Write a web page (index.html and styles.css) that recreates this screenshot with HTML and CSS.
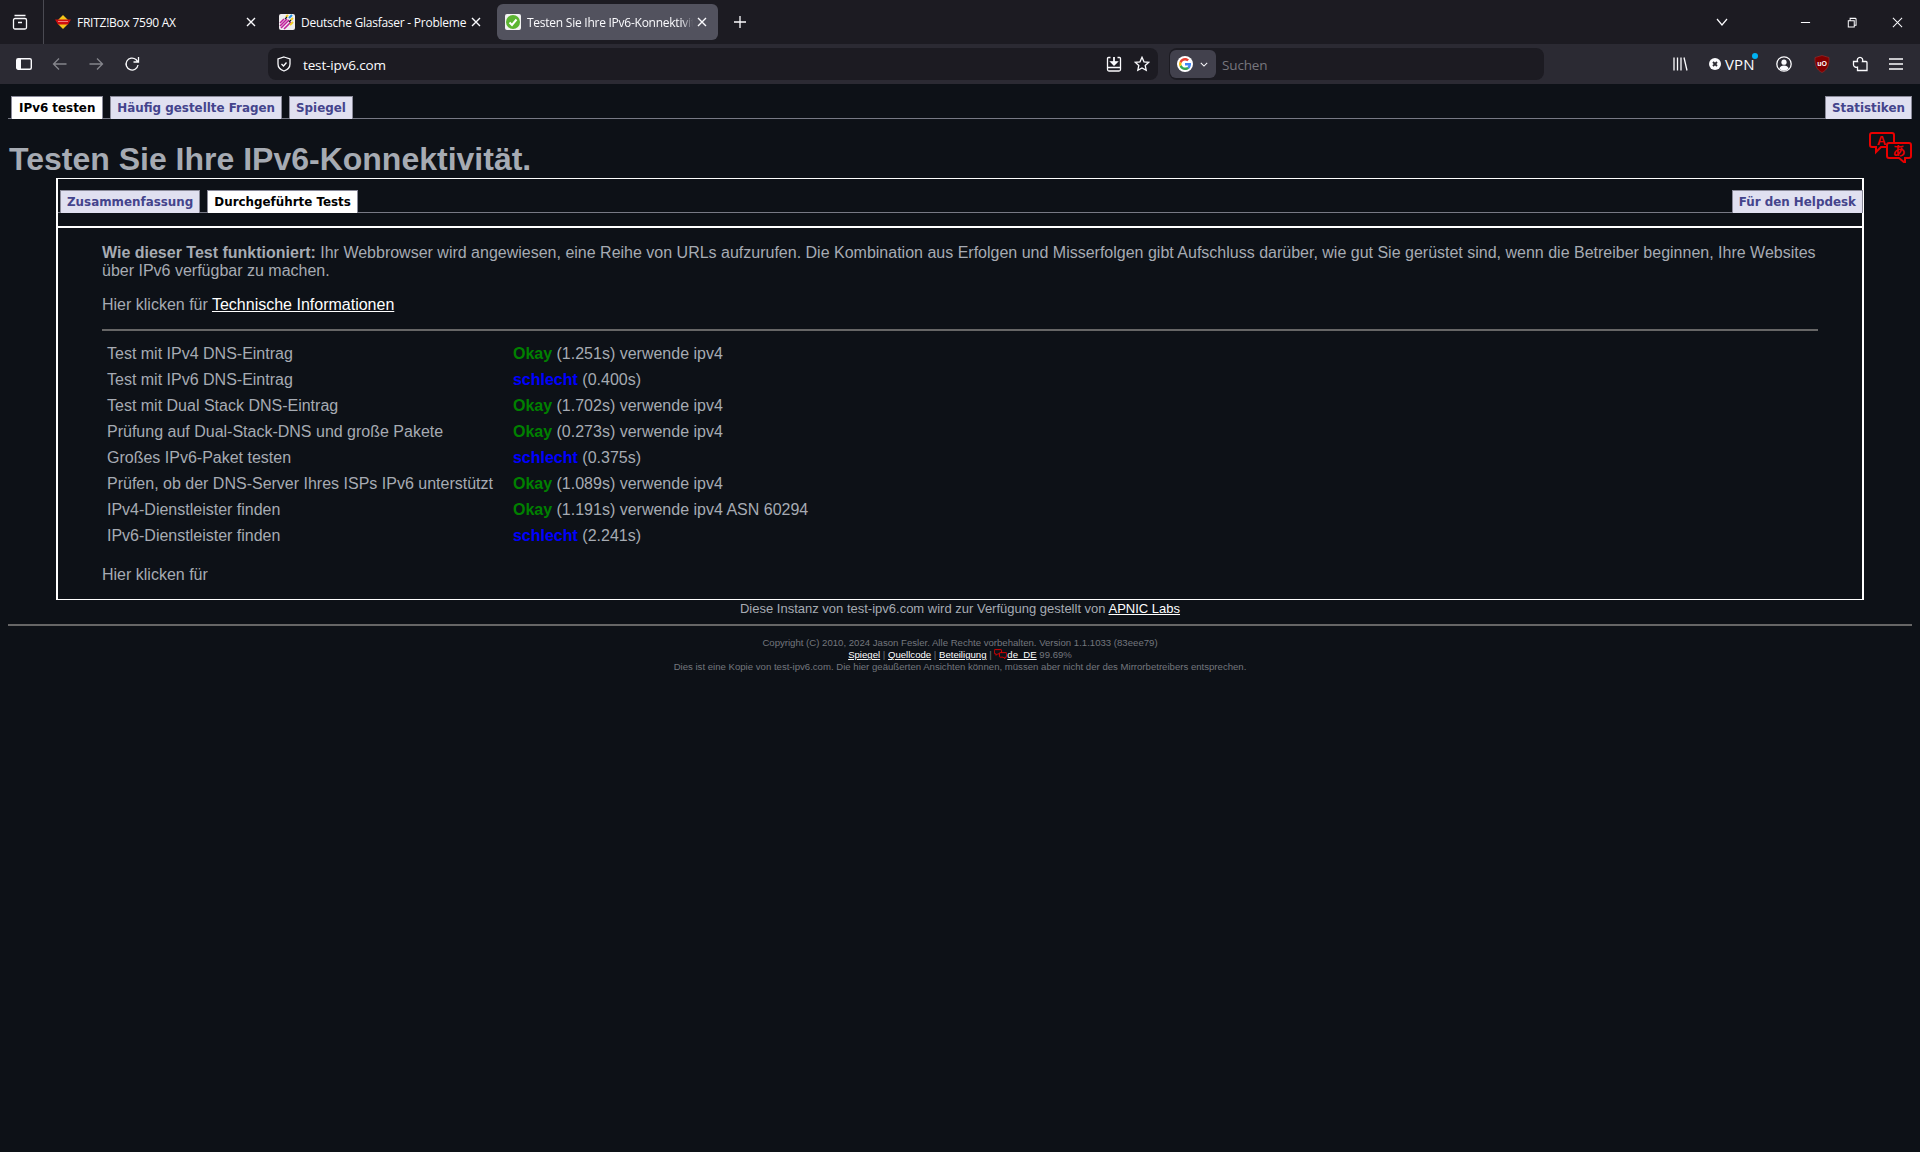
FILE: index.html
```html
<!DOCTYPE html>
<html lang="de">
<head>
<meta charset="utf-8">
<title>Testen Sie Ihre IPv6-Konnektivität.</title>
<link rel="stylesheet" href="styles.css">
</head>
<body>
<header class="chrome">
  <div class="tabbar">
    <div class="tabgroup-btn">
      <svg class="ico" viewBox="0 0 16 16"><path d="M2.500 1.500h11M1.500 6a1.500 1.500 0 0 1 1.500-1.500h10a1.500 1.500 0 0 1 1.500 1.500v7.500a1.500 1.500 0 0 1-1.500 1.500h-10a1.500 1.500 0 0 1-1.500-1.500zM6 8.500h4"/></svg>
    </div>
    <div class="tab tab-a">
      <svg class="fav" viewBox="0 0 16 16"><path d="M8 1l5 5v4l-5 5-5-5V6z" fill="#f5c518"/><path d="M0 5.500h16l-3 5H3z" fill="#d01010"/><path d="M3 7.500h10" stroke="#f08080" stroke-width="1"/></svg>
      <span class="tab-title">FRITZ!Box 7590 AX</span>
      <svg class="tab-x" viewBox="0 0 10 10"><path d="M1 1l8 8M9 1l-8 8"/></svg>
    </div>
    <div class="tab tab-b">
      <svg class="fav" viewBox="0 0 16 16"><rect width="16" height="16" rx="2" fill="#f0eef0"/><path d="M1 9l4-4M1 12l7-7M2 14l8-8M5 15l7-7" stroke="#c0209c" stroke-width="1.600"/><path d="M7 3l2-2M12 6l2-2" stroke="#f5d020" stroke-width="2"/><path d="M10 4l3-3" stroke="#2090e0" stroke-width="2"/><path d="M11 11l3-3" stroke="#f5d020" stroke-width="2"/><path d="M6 5l2-2M10 8l2-2" stroke="#222" stroke-width="1.200"/></svg>
      <span class="tab-title">Deutsche Glasfaser - Probleme</span>
      <svg class="tab-x" viewBox="0 0 10 10"><path d="M1 1l8 8M9 1l-8 8"/></svg>
    </div>
    <div class="tab tab-c">
      <svg class="fav" viewBox="0 0 16 16"><rect width="16" height="16" rx="2" fill="#f2f2f2"/><circle cx="8" cy="8" r="7" fill="#5cb531"/><path d="M4.500 8.500l2.500 2.500 4.500-5.500" fill="none" stroke="#fff" stroke-width="2"/></svg>
      <span class="tab-title tab-fade">Testen Sie Ihre IPv6-Konnektivität.</span>
      <svg class="tab-x" viewBox="0 0 10 10"><path d="M1 1l8 8M9 1l-8 8"/></svg>
    </div>
    <svg class="newtab" viewBox="0 0 12 12"><path d="M6 0v12M0 6h12"/></svg>
    <div class="flex-fill"></div>
    <svg class="listall" viewBox="0 0 12 8"><path d="M1 1l5 6 5-6"/></svg>
    <svg class="winbtn win-min" viewBox="0 0 12 12"><path d="M1 6h10"/></svg>
    <svg class="winbtn win-max" viewBox="0 0 12 12"><path d="M2.500 4h6.500v7h-6.500zM4.500 4V1.500h5.500a1 1 0 0 1 1 1V9H9"/></svg>
    <svg class="winbtn win-close" viewBox="0 0 12 12"><path d="M1 1l10 10M11 1L1 11"/></svg>
  </div>
  <div class="toolbar">
    <svg class="ico sidebar" viewBox="0 0 16 16"><rect x=".700" y="2.700" width="14.600" height="10.600" rx="1.500" stroke-width="1.400"/><rect x="1" y="3" width="4" height="10" fill="#fbfbfe" stroke="none"/></svg>
    <svg class="ico nav dim" viewBox="0 0 16 16"><path d="M14.500 8h-13M7 2.500L1.500 8 7 13.500"/></svg>
    <svg class="ico nav dim" viewBox="0 0 16 16"><path d="M1.500 8h13M9 2.500L14.500 8 9 13.500"/></svg>
    <svg class="ico nav" viewBox="0 0 16 16"><path d="M14 9a6 6 0 1 1-2-5.500L14 6M14.500 1v5H9.500"/></svg>
    <div class="urlbar">
      <svg class="ico shield" viewBox="0 0 16 16"><path d="M8 1l6 2v5c0 3.500-2.500 5.800-6 7-3.500-1.200-6-3.500-6-7V3zM5.500 8l2 2 3-3.500"/></svg>
      <span class="url">test-ipv6.com</span>
      <div class="flex-fill"></div>
      <svg class="ico save" viewBox="0 0 16 16"><path d="M4.500 1.500H2.500a1 1 0 0 0-1 1v11a1.500 1.500 0 0 0 1.500 1.500h10a1.500 1.500 0 0 0 1.500-1.500v-11a1 1 0 0 0-1-1h-2M1.500 11.500h13"/><path d="M8 1v6" stroke-width="1.800"/><path d="M4.800 5.800L8 9l3.200-3.200z" fill="#fbfbfe"/></svg>
      <svg class="ico star" viewBox="0 0 16 16"><path d="M8 1.300l2 4.500 4.800.5-3.600 3.200 1 4.800L8 12l-4.200 2.300 1-4.800L1.200 6.300 6 5.800z"/></svg>
    </div>
    <div class="searchbar">
      <div class="engine">
        <svg class="gicon" viewBox="0 0 16 16"><circle cx="8" cy="8" r="8" fill="#fff"/><path d="M14 8.200c0-.5 0-.9-.1-1.300H8v2.500h3.400c-.2.800-.6 1.500-1.300 1.900l2 1.500C13.200 11.700 14 10.100 14 8.200z" fill="#4285f4"/><path d="M8 14c1.700 0 3-.6 4.100-1.600l-2-1.500c-.6.400-1.300.7-2.100.7-1.600 0-3-1.100-3.400-2.600L2.600 10.500C3.600 12.600 5.600 14 8 14z" fill="#34a853"/><path d="M4.600 9C4.500 8.700 4.400 8.300 4.400 8s.1-.7.200-1L2.600 5.500C2.200 6.300 2 7.100 2 8s.2 1.700.6 2.500z" fill="#fbbc05"/><path d="M8 4.400c.9 0 1.700.3 2.300.9l1.700-1.700C11 2.600 9.600 2 8 2 5.600 2 3.600 3.400 2.600 5.500L4.600 7C5 5.500 6.400 4.400 8 4.400z" fill="#ea4335"/></svg>
        <svg class="engine-caret" viewBox="0 0 10 6"><path d="M1 1l4 4 4-4"/></svg>
      </div>
      <span class="search-ph">Suchen</span>
    </div>
    <svg class="ico lib" viewBox="0 0 16 16"><path d="M2 1.500v13M5.500 1.500v13M9 1.500v13M12 1.500l3 13"/></svg>
    <div class="vpn">
      <svg class="vpn-dot" viewBox="0 0 12 12"><circle cx="6" cy="6" r="6" fill="#fbfbfe"/><path d="M4 4l4 4M8 4l-4 4" stroke="#2b2a33" stroke-width="1.800"/></svg>
      <span class="vpn-label">VPN</span>
      <span class="vpn-badge"></span>
    </div>
    <svg class="ico prof" viewBox="0 0 16 16"><circle cx="8" cy="8" r="7.200"/><circle cx="8" cy="6.200" r="2.600" fill="#fbfbfe" stroke="none"/><path d="M3.300 12.500c.7-2 2.500-3 4.700-3s4 1 4.700 3c-1.200 1.200-2.800 2-4.700 2s-3.500-.8-4.700-2z" fill="#fbfbfe" stroke="none"/></svg>
    <svg class="ublock" viewBox="0 0 16 18"><path d="M8 .5l7 2c.4 7-1.500 12.500-7 15-5.500-2.500-7.400-8-7-15z" fill="#800000" stroke="#a03030" stroke-width=".6"/><text x="8" y="10.500" class="ublock-text">uO</text></svg>
    <svg class="ico ext" viewBox="0 0 16 16"><path d="M1.500 5.500h4c-.8-2 .5-4.200 2.500-4.200s3.300 2.200 2.500 4.200h3.500c.6 0 1 .4 1 1v8h-9.500v-3.300c-1.800.5-4-.5-4-2.500z"/></svg>
    <svg class="ico menu" viewBox="0 0 16 16"><path d="M1 3h14M1 8h14M1 13h14"/></svg>
  </div>
</header>

<main class="page">
  <nav class="tabs tabs-top">
    <a class="pill pill-on">IPv6 testen</a>
    <a class="pill">Häufig gestellte Fragen</a>
    <a class="pill">Spiegel</a>
    <a class="pill pill-right">Statistiken</a>
  </nav>
  <svg class="translate" viewBox="0 0 43 31">
    <path d="M3 1h20a2 2 0 0 1 2 2v10a2 2 0 0 1-2 2H12l-5 5v-5H3a2 2 0 0 1-2-2V3a2 2 0 0 1 2-2z" class="bubble"/>
    <text x="12.500" y="12.500" class="bubble-a">A</text>
    <path d="M20 11h20a2 2 0 0 1 2 2v11a2 2 0 0 1-2 2h-4v5l-6-5H20a2 2 0 0 1-2-2V13a2 2 0 0 1 2-2z" class="bubble bubble-front"/>
    <text x="30" y="23" class="bubble-j">あ</text>
  </svg>
  <h1 class="title">Testen Sie Ihre IPv6-Konnektivität.</h1>

  <section class="box">
    <nav class="tabs tabs-inner">
      <a class="pill">Zusammenfassung</a>
      <a class="pill pill-on">Durchgeführte Tests</a>
      <a class="pill pill-right">Für den Helpdesk</a>
    </nav>
    <div class="content">
      <p class="intro"><b>Wie dieser Test funktioniert:</b> Ihr Webbrowser wird angewiesen, eine Reihe von URLs aufzurufen. Die Kombination aus Erfolgen und Misserfolgen gibt Aufschluss darüber, wie gut Sie gerüstet sind, wenn die Betreiber beginnen, Ihre Websites über IPv6 verfügbar zu machen.</p>
      <p class="tech">Hier klicken für <a class="link">Technische Informationen</a></p>
      <hr class="rule">
      <table class="results">
        <tr><td>Test mit IPv4 DNS-Eintrag</td><td><b class="ok">Okay</b> (1.251s) verwende ipv4</td></tr>
        <tr><td>Test mit IPv6 DNS-Eintrag</td><td><b class="bad">schlecht</b> (0.400s)</td></tr>
        <tr><td>Test mit Dual Stack DNS-Eintrag</td><td><b class="ok">Okay</b> (1.702s) verwende ipv4</td></tr>
        <tr><td>Prüfung auf Dual-Stack-DNS und große Pakete</td><td><b class="ok">Okay</b> (0.273s) verwende ipv4</td></tr>
        <tr><td>Großes IPv6-Paket testen</td><td><b class="bad">schlecht</b> (0.375s)</td></tr>
        <tr><td>Prüfen, ob der DNS-Server Ihres ISPs IPv6 unterstützt</td><td><b class="ok">Okay</b> (1.089s) verwende ipv4</td></tr>
        <tr><td>IPv4-Dienstleister finden</td><td><b class="ok">Okay</b> (1.191s) verwende ipv4 ASN 60294</td></tr>
        <tr><td>IPv6-Dienstleister finden</td><td><b class="bad">schlecht</b> (2.241s)</td></tr>
      </table>
      <p class="more">Hier klicken für</p>
    </div>
  </section>

  <p class="instance">Diese Instanz von test-ipv6.com wird zur Verfügung gestellt von <a class="link">APNIC Labs</a></p>
  <hr class="rule rule-foot">
  <footer class="foot">
    <div>Copyright (C) 2010, 2024 Jason Fesler. Alle Rechte vorbehalten. Version 1.1.1033 (83eee79)</div>
    <div><a class="link">Spiegel</a> | <a class="link">Quellcode</a> | <a class="link">Beteiligung</a> | <svg class="translate-mini" viewBox="0 0 43 31"><path d="M3 1h20a2 2 0 0 1 2 2v10a2 2 0 0 1-2 2H12l-5 5v-5H3a2 2 0 0 1-2-2V3a2 2 0 0 1 2-2z" class="bubble bubble-bold"/><path d="M20 11h20a2 2 0 0 1 2 2v11a2 2 0 0 1-2 2h-4v5l-6-5H20a2 2 0 0 1-2-2V13a2 2 0 0 1 2-2z" class="bubble bubble-bold"/></svg><a class="link">de_DE</a> 99.69%</div>
    <div>Dies ist eine Kopie von test-ipv6.com. Die hier geäußerten Ansichten können, müssen aber nicht der des Mirrorbetreibers entsprechen.</div>
  </footer>
</main>
</body>
</html>
```
FILE: styles.css
```css
* { box-sizing: border-box; }
html, body { margin: 0; padding: 0; }
body {
  width: 1920px;
  height: 1152px;
  overflow: hidden;
  background: #0d1117;
  color: #a6abb3;
  font-family: "Liberation Sans", Arial, sans-serif;
}

/* browser chrome */
.chrome { font-family: "Open Sans", "Noto Sans", sans-serif; color: #fbfbfe; }
.tabbar {
  height: 44px;
  background: #1c1b22;
  display: flex;
  align-items: center;
}
.tabgroup-btn {
  width: 44px;
  height: 44px;
  border-right: 1px solid #4a4a52;
  display: flex;
  align-items: center;
  justify-content: center;
  padding-right: 3px;
}
.ico {
  width: 16px;
  height: 16px;
  flex: none;
  fill: none;
  stroke: #fbfbfe;
  stroke-width: 1.300;
}
.tab {
  height: 36px;
  display: flex;
  align-items: center;
  padding: 0 8px;
  border-radius: 6px;
  flex: none;
  font-size: 12px;
  letter-spacing: -0.250px;
}
.tab-a { width: 226px; padding-left: 11px; }
.tab-a .tab-x { margin-right: 6px; }
.tab-b { width: 225px; padding-left: 9px; }
.tab-b .tab-x { margin-right: 6px; }
.tab-c { width: 221px; margin-left: 2px; background: #52525e; }
.fav { width: 16px; height: 16px; flex: none; margin-right: 6px; }
.tab-title {
  flex: 1;
  white-space: nowrap;
  overflow: hidden;
  min-width: 0;
}
.tab-fade {
  -webkit-mask-image: linear-gradient(to right, #000 93%, transparent 100%);
  mask-image: linear-gradient(to right, #000 93%, transparent 100%);
}
.tab-x {
  width: 10px;
  height: 10px;
  flex: none;
  margin: 0 3px 0 4px;
  fill: none;
  stroke: #fbfbfe;
  stroke-width: 1.400;
}
.newtab {
  width: 12px;
  height: 12px;
  margin-left: 16px;
  fill: none;
  stroke: #fbfbfe;
  stroke-width: 1.300;
}
.flex-fill { flex: 1; }
.listall {
  width: 12px;
  height: 8px;
  fill: none;
  stroke: #fbfbfe;
  stroke-width: 1.200;
  margin-right: 72px;
}
.winbtn {
  width: 11px;
  height: 11px;
  fill: none;
  stroke: #fbfbfe;
  stroke-width: 1.100;
}
.win-max { margin-left: 35px; }
.win-close { margin-left: 35px; margin-right: 17px; }

.toolbar {
  height: 40px;
  background: #2b2a33;
  display: flex;
  align-items: center;
  padding-left: 16px;
}
.sidebar { margin-right: 20px; }
.nav { margin-right: 20px; }
.dim { stroke: #85858c; }
.urlbar {
  width: 890px;
  height: 32px;
  margin-left: 108px;
  background: #1c1b22;
  border-radius: 8px;
  display: flex;
  align-items: center;
  padding: 0 8px 0 8px;
}
.shield { margin-right: 11px; }
.url { font-size: 13.500px; letter-spacing: -0.150px; padding-top: 1px; }
.star { margin-left: 12px; }
.searchbar {
  width: 375px;
  height: 32px;
  margin-left: 11px;
  background: #1c1b22;
  border-radius: 8px;
  display: flex;
  align-items: center;
  padding-left: 1px;
}
.engine {
  width: 46px;
  height: 28px;
  background: #42414d;
  border-radius: 6px;
  display: flex;
  align-items: center;
  padding-left: 7px;
}
.gicon { width: 16px; height: 16px; }
.engine-caret {
  width: 8px;
  height: 5px;
  margin-left: 7px;
  fill: none;
  stroke: #fbfbfe;
  stroke-width: 1.300;
}
.search-ph { font-size: 13.500px; color: #77767d; margin-left: 6px; letter-spacing: -0.150px; padding-top: 1px; }
.lib { margin-left: 128px; }
.vpn {
  position: relative;
  display: flex;
  align-items: center;
  margin-left: 21px;
  width: 48px;
}
.vpn-dot { width: 12px; height: 12px; flex: none; }
.vpn-label { font-size: 15px; margin-left: 4px; letter-spacing: .1px; }
.vpn-badge {
  position: absolute;
  right: -1px;
  top: -1px;
  width: 6px;
  height: 6px;
  border-radius: 50%;
  background: #00b3f4;
}
.prof { margin-left: 19px; }
.ublock { width: 16px; height: 18px; margin-left: 22px; flex: none; }
.ublock-text { font: 700 7px "Liberation Sans", sans-serif; fill: #fff; text-anchor: middle; }
.ext { margin-left: 22px; }
.menu { margin-left: 20px; }

/* page */
.page { position: relative; padding: 12px 8px 0 8px; }
.tabs {
  display: flex;
  align-items: flex-end;
  gap: 7px;
  border-bottom: 1px solid #777985;
  font: 700 11.900px "DejaVu Sans", Verdana, sans-serif;
}
.tabs-top { height: 23px; padding: 0 0 0 3px; }
.pill {
  height: 23px;
  line-height: 22px;
  margin-bottom: -1px;
  padding: 0 6px;
  border: 1px solid #8a8a99;
  border-bottom: 0;
  background: #e0e0f0;
  color: #44448c;
  white-space: nowrap;
}
.pill-on { background: #fff; color: #000; }
.tabs-top .pill-on { padding: 0 7px; }
.pill-right { margin-left: auto; }
.translate {
  position: absolute;
  right: 8px;
  top: 48px;
  width: 43px;
  height: 31px;
}
.bubble { fill: #0d1117; stroke: #e80000; stroke-width: 2; }
.bubble-a, .bubble-j { fill: #e80000; text-anchor: middle; font: 700 13px "Liberation Sans", "Noto Sans CJK JP", sans-serif; }
.title {
  margin: 22px 0 0 1px;
  height: 36px;
  font-size: 32px;
  line-height: 36px;
  font-weight: 700;
  color: #a6abb3;
}
.box {
  margin: 1px 48px 0 48px;
  height: 422px;
  border: 2px solid #fff;
  border-width: 1px 2px 1px 2px;
}
.tabs-inner { margin-top: 11px; margin-right: -1px; height: 23px; padding-left: 2px; }
.content {
  margin-top: 13px;
  border-top: 2px solid #fff;
  padding: 16px 44px 0 44px;
  font-size: 16px;
  line-height: 18px;
}
.content p { margin: 0; }
.content .tech { margin-top: 16px; }
.link { color: #fff; text-decoration: underline; }
.rule {
  border: 0;
  border-top: 2px solid #666;
  margin: 15px 0 0 0;
}
.results {
  margin-top: 10px;
  border-collapse: collapse;
}
.results td { padding: 4px 5px; height: 26px; line-height: 18px; white-space: nowrap; }
.results td:first-child { padding-right: 15px; }
.ok { color: #008000; }
.bad { color: #0000ff; }
.content .more { margin-top: 17px; }
.instance {
  margin: 0;
  text-align: center;
  font-size: 13px;
  line-height: 16px;
  padding-top: 1px;
}
.rule-foot { margin-top: 7px; }
.foot {
  margin-top: 11px;
  text-align: center;
  font-size: 9.600px;
  line-height: 12.200px;
  color: #73767d;
}
.translate-mini { width: 13px; height: 10px; vertical-align: top; }
.bubble-bold { stroke-width: 3; }
```
